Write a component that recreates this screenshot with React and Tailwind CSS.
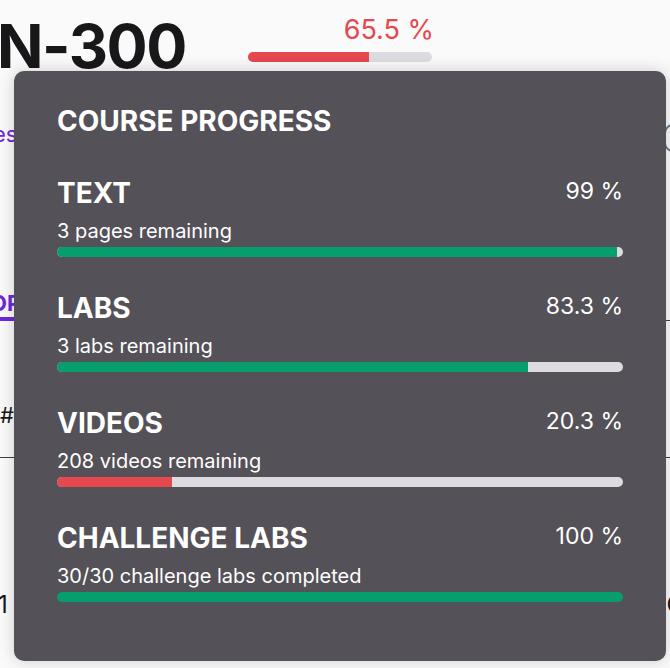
import React from 'react'

const items = [
    { title: 'TEXT', note: '3 pages remaining', pct: 99, color: 'bg-[#069e6c]' },
    { title: 'LABS', note: '3 labs remaining', pct: 83.3, color: 'bg-[#069e6c]' },
    { title: 'VIDEOS', note: '208 videos remaining', pct: 20.3, color: 'bg-[#e5484d]' },
    { title: 'CHALLENGE LABS', note: '30/30 challenge labs completed', pct: 100, color: 'bg-[#069e6c]' },
]

const Bar = ({ pct, color }) => (
    <div className="h-[10px] w-full overflow-hidden rounded-full bg-[#dcdbdf]">
        <div className={`h-full ${color}`} style={{ width: `${pct}%` }} />
    </div>
)

const App = () => {
    return (
        <div className="relative h-[668px] w-[670px] overflow-hidden bg-[#fafafa] font-['Inter',sans-serif] text-[#18181b]">
            {/* page behind the popover */}
            <div className="flex items-start pt-[10px]">
                <h1 className="ml-[-3px] w-[251px] text-[61px] font-bold leading-[72px] tracking-[-1.5px]">N-300</h1>
                <div className="mt-[4px] w-[186px]">
                    <div className="text-right text-[27px] leading-[32px] text-[#e5484d]">65.5 %</div>
                    <div className="mt-[6px] h-[10px] w-[184px] overflow-hidden rounded-full bg-[#dcdbdf]">
                        <div className="h-full w-[65.5%] bg-[#e5484d]" />
                    </div>
                </div>
            </div>
            <div className="flex justify-between">
                <span className="ml-[-7px] mt-[38px] text-[22px] leading-[28px] text-[#6d28d9]">es</span>
                <span className="mr-[-12px] mt-[42px] h-[28px] w-[18px] rounded-full border-2 border-[#64748b]" />
            </div>
            <div className="mt-[137px] flex items-end justify-between">
                <div className="ml-[-10px] border-b-4 border-[#6d28d9] text-[22px] font-bold leading-[28px] text-[#6d28d9]">OP</div>
                <div className="h-px w-[10px] bg-[#3f3f46]" />
            </div>
            <div className="mt-[80px] text-[22px] leading-[28px]">#</div>
            <div className="mt-[28px] h-px w-full bg-[#3f3f46]" />
            <div className="mt-[132px] flex justify-between text-[24px] leading-[30px]">
                <span className="ml-[-2px]">1</span>
                <span className="mr-[-14px]">C</span>
            </div>

            {/* course progress popover */}
            <div className="absolute left-[14px] top-[71px] h-[590px] w-[652px] rounded-[10px] bg-[#545158] px-[43px] pt-[33px] text-white shadow-[0_0_16px_rgba(0,0,0,0.18)]">
                <h2 className="text-[28px] font-bold leading-[34px]">COURSE PROGRESS</h2>
                <div className="mt-[38px] flex flex-col gap-[34px]">
                    {items.map((item) => (
                        <div key={item.title}>
                            <div className="flex items-start justify-between">
                                <div className="text-[28px] font-bold leading-[34px]">{item.title}</div>
                                <div className="mt-[1px] text-[23px] leading-[28px]">{item.pct} %</div>
                            </div>
                            <div className="mt-[9px] text-[20px] leading-[24px]">{item.note}</div>
                            <div className="mt-[4px]">
                                <Bar pct={item.pct} color={item.color} />
                            </div>
                        </div>
                    ))}
                </div>
            </div>
        </div>
    )
}

export default App
